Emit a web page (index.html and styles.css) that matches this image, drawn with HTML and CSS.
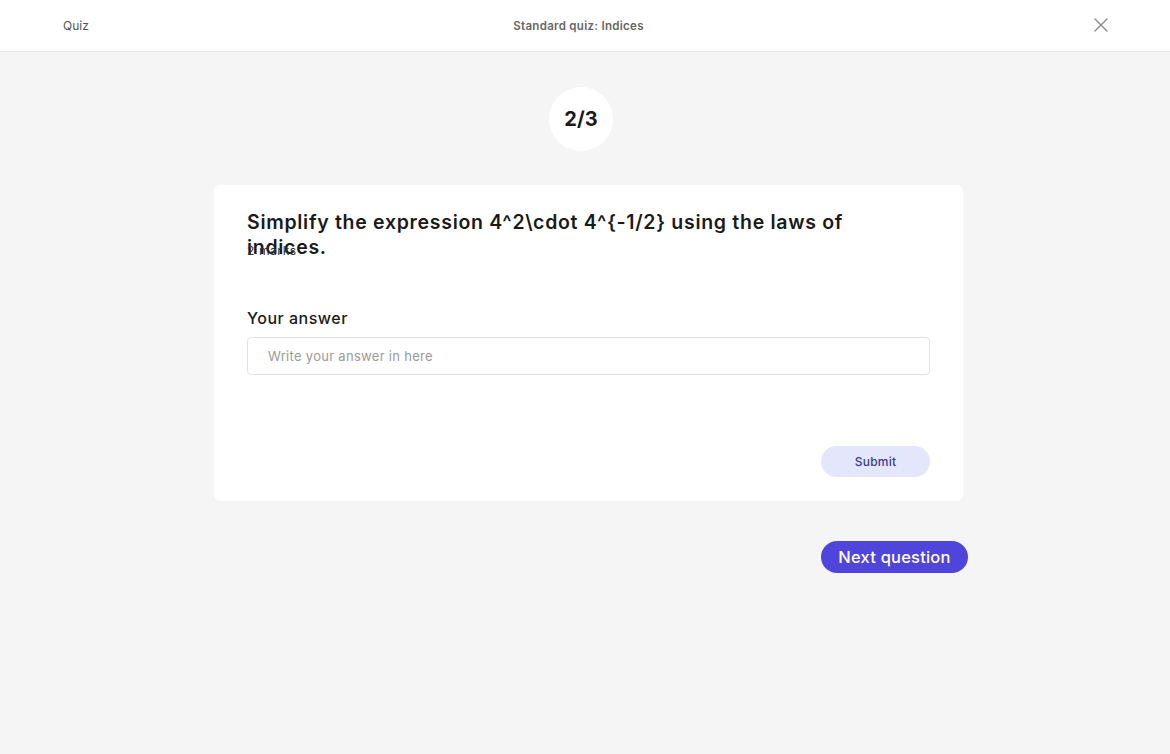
FILE: index.html
```html
<!DOCTYPE html>
<html lang="en">
<head>
<meta charset="utf-8">
<title>Standard quiz: Indices</title>
<link rel="stylesheet" href="styles.css">
</head>
<body>
<header class="topbar">
  <span class="topbar-label">Quiz</span>
  <span class="topbar-title">Standard quiz: Indices</span>
  <button class="close-btn" aria-label="Close">
    <svg width="14" height="14" viewBox="0 0 14 14"><path d="M1 1L13 13M13 1L1 13" stroke="#8a8a8a" stroke-width="1.4" stroke-linecap="round"/></svg>
  </button>
</header>
<main class="main">
  <div class="progress">2/3</div>
  <div class="wrap">
    <section class="card">
      <h1 class="question">Simplify the expression 4^2\cdot 4^{-1/2} using the laws of indices.</h1>
      <div class="marks">2 marks</div>
      <label class="answer-label" for="ans">Your answer</label>
      <input id="ans" class="answer-input" type="text" placeholder="Write your answer in here">
      <div class="card-actions">
        <button class="submit-btn">Submit</button>
      </div>
    </section>
    <div class="next-row">
      <button class="next-btn">Next question</button>
    </div>
  </div>
</main>
</body>
</html>
```

FILE: styles.css
```css
* { box-sizing: border-box; }
html, body { margin: 0; padding: 0; }
body {
  background: #f5f5f5;
  font-family: "Inter", "Open Sans", sans-serif;
  color: #1a1a1a;
  min-height: 754px;
}
.topbar {
  height: 52px;
  background: #fff;
  border-bottom: 1px solid #e6e6e6;
  display: grid;
  grid-template-columns: 1fr auto 1fr;
  align-items: center;
  padding: 0 62px 0 63px;
}
.topbar-label {
  font-size: 12px;
  color: #555;
}
.topbar-title {
  font-size: 11.5px;
  font-weight: 600;
  color: #666;
  letter-spacing: 0.3px;
  margin-left: -14px;
}
.close-btn {
  justify-self: end;
  background: none;
  border: 0;
  padding: 0;
  width: 14px;
  height: 14px;
  margin-top: -2px;
  display: flex;
}
.main {
  padding-top: 35px;
  padding-bottom: 60px;
}
.progress {
  width: 64px;
  height: 64px;
  border-radius: 50%;
  background: #fff;
  margin-left: 549px;
  display: flex;
  align-items: center;
  justify-content: center;
  font-size: 20px;
  font-weight: 700;
  color: #1a1a1a;
}
.wrap {
  width: 754px;
  margin: 34px 0 0 214px;
}
.card {
  width: 749px;
  background: #fff;
  border-radius: 6px;
  padding: 25px 33px 24px;
  display: flex;
  flex-direction: column;
}
.question {
  margin: 0;
  font-size: 19.5px;
  font-weight: 600;
  line-height: 25px;
  height: 25px;
  max-width: 640px;
  color: #1a1a1a;
  letter-spacing: 0.7px;
}
.marks {
  margin-top: 8px;
  font-size: 12px;
  line-height: 16px;
  color: #333;
  letter-spacing: 0.6px;
}
.answer-label {
  margin-top: 47px;
  font-size: 16px;
  line-height: 24px;
  font-weight: 500;
  color: #1a1a1a;
  letter-spacing: 0.5px;
}
.answer-input {
  margin-top: 7px;
  height: 38px;
  border: 1px solid #e2e2e2;
  border-radius: 4px;
  padding: 0 20px;
  font-family: inherit;
  font-size: 13px;
  letter-spacing: 0.3px;
  color: #333;
  outline: none;
}
.answer-input::placeholder { color: #9a9a9a; }
.card-actions {
  margin-top: 71px;
  display: flex;
  justify-content: flex-end;
}
.submit-btn {
  width: 109px;
  height: 31px;
  border: 0;
  border-radius: 16px;
  background: #e4e6fb;
  color: #3b3a8a;
  font-family: inherit;
  font-size: 12px;
  font-weight: 500;
  letter-spacing: 0.2px;
}
.next-row {
  margin-top: 40px;
  display: flex;
  justify-content: flex-end;
}
.next-btn {
  width: 147px;
  height: 32px;
  border: 0;
  border-radius: 16px;
  background: #4f45db;
  color: #fff;
  font-family: inherit;
  font-size: 16.5px;
  font-weight: 500;
  letter-spacing: 0.2px;
}
```
